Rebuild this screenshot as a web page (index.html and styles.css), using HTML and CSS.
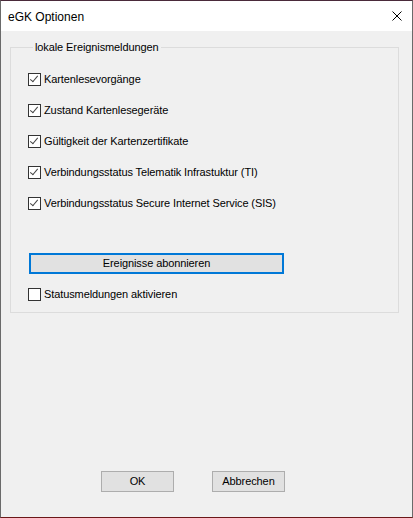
FILE: index.html
```html
<!DOCTYPE html>
<html>
    <head>
        <meta charset="utf-8">
        <title>eGK Optionen</title>
        <link rel="stylesheet" href="styles.css">
    </head>
    <body>
        <div class="window">
            <div class="titlebar">
                <span class="title">eGK Optionen</span>
                <svg class="close" width="10" height="10" viewBox="0 0 10 10">
                    <path d="M0.5 0.5 L9.5 9.5 M9.5 0.5 L0.5 9.5" stroke="#000" stroke-width="1" fill="none"/>
                </svg>
            </div>
            <div class="content">
                <fieldset class="group">
                    <legend>lokale Ereignismeldungen</legend>
                    <div class="list">
                        <div class="row"><span class="box checked"></span>Kartenlesevorgänge</div>
                        <div class="row"><span class="box checked"></span>Zustand Kartenlesegeräte</div>
                        <div class="row"><span class="box checked"></span>Gültigkeit der Kartenzertifikate</div>
                        <div class="row"><span class="box checked"></span>Verbindungsstatus Telematik Infrastuktur (TI)</div>
                        <div class="row"><span class="box checked"></span>Verbindungsstatus Secure Internet Service (SIS)</div>
                    </div>
                    <div class="btn wide">Ereignisse abonnieren</div>
                    <div class="row last"><span class="box"></span>Statusmeldungen aktivieren</div>
                </fieldset>
                <div class="footer">
                    <div class="btn">OK</div>
                    <div class="btn">Abbrechen</div>
                </div>
            </div>
        </div>
    </body>
</html>
```
FILE: styles.css
```css
body{
    margin: 0;
    font-family: "Liberation Sans", Arial, sans-serif;
    font-size: 11px;
    letter-spacing: -0.1px;
    color: #000;
}
.window{
    width: 411px;
    height: 516px;
    border-left: 1px solid #6a6a6a;
    border-right: 1px solid #6a6a6a;
    border-top: 1px solid #4a2a3a;
    border-bottom: 1px solid #6b1818;
    display: flex;
    flex-direction: column;
    background: #f0f0f0;
}
.titlebar{
    height: 30px;
    background: #fff;
    display: flex;
    align-items: center;
    justify-content: space-between;
    padding: 0 10px 0 7px;
}
.title{
    font-size: 12px;
    letter-spacing: 0;
    padding-top: 1px;
}
.close{
    display: block;
}
.content{
    flex: 1;
    display: flex;
    flex-direction: column;
}
.group{
    margin: 10px 0 0 9px;
    width: 389px;
    height: 272px;
    box-sizing: border-box;
    padding: 0 0 0 17px;
    border: 1px solid #dcdcdc;
}
.group legend{
    padding: 0 2px;
    margin-left: 5px;
    line-height: 13px;
}
.list{
    display: flex;
    flex-direction: column;
    gap: 18px;
    margin-top: 19px;
}
.row{
    display: flex;
    align-items: center;
    height: 13px;
    line-height: 13px;
    white-space: nowrap;
}
.box{
    width: 11px;
    height: 11px;
    border: 1px solid #333;
    background: #fff;
    margin-right: 3px;
    flex: none;
    position: relative;
}
.box.checked::after{                    /*haken*/
    content: "";
    position: absolute;
    left: 3px;
    top: 0px;
    width: 3px;
    height: 7px;
    border-right: 1px solid #444;
    border-bottom: 1px solid #444;
    transform: rotate(40deg);
}
.btn{
    box-sizing: border-box;
    width: 73px;
    height: 21px;
    border: 1px solid #adadad;
    background: #e1e1e1;
    text-align: center;
    line-height: 19px;
}
.btn.wide{
    width: 255px;
    border: 2px solid #0078d7;
    line-height: 17px;
    margin: 43px 0 0 1px;
}
.row.last{
    margin-top: 14px;
}
.footer{
    margin-top: auto;
    display: flex;
    gap: 38px;
    padding: 0 0 25px 100px;
}
```
